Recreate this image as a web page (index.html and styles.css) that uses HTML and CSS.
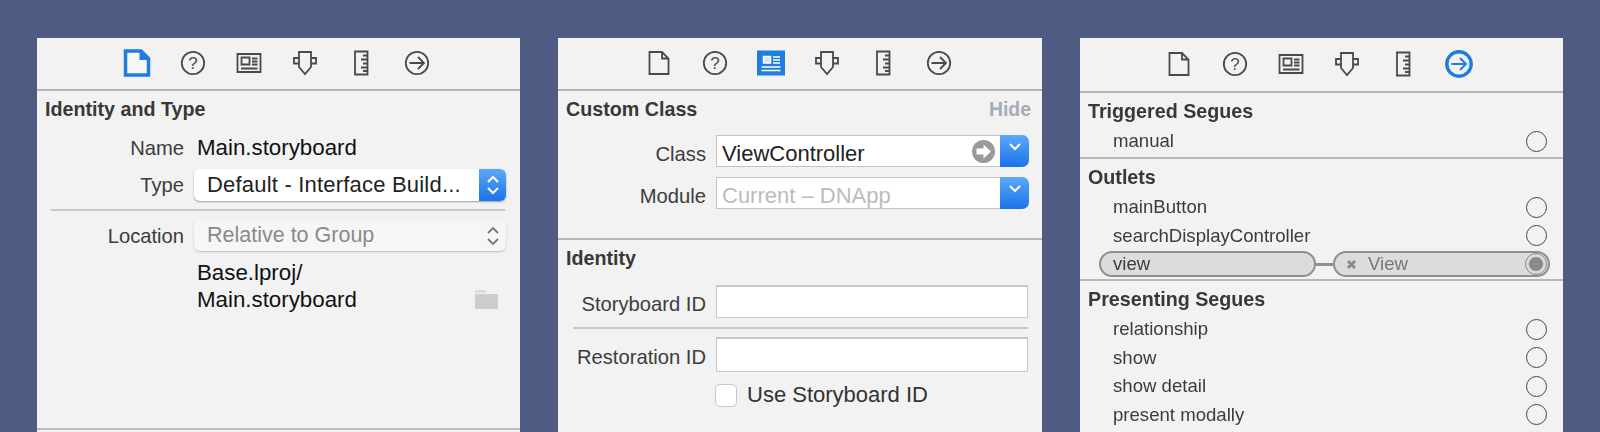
FILE: index.html
```html
<!DOCTYPE html>
<html lang="en">
<head>
<meta charset="utf-8">
<title>Xcode inspectors</title>
<link rel="stylesheet" href="styles.css">
</head>
<body>
<svg class="defs" width="0" height="0" aria-hidden="true">
  <symbol id="i-doc" viewBox="0 0 28 28"><path d="M4.500 3h12.500l6.500 6.500v15.500H4.500z M17 3v6.500h6.500" fill="none" stroke="currentColor" stroke-width="1.800"/></symbol>
  <symbol id="i-news" viewBox="0 0 28 28"><path d="M2.500 5h23v18h-23z M6.500 8.500h8v7h-8z M17 9.500h5.500 M17 12.500h5.500 M17 15.500h5.500 M6 19.500h16.500" fill="none" stroke="currentColor" stroke-width="1.800"/></symbol>
  <symbol id="i-shield" viewBox="0 0 28 28"><path d="M8 3h12v15l-6 7-6-7z M8 9H3v5.500h5 M20 9h5v5.500h-5" fill="none" stroke="currentColor" stroke-width="1.800"/></symbol>
  <symbol id="i-ruler" viewBox="0 0 28 28"><path d="M8 2.500h12.500v23H8z M20 6.500h-4 M20 10.500h-6 M20 14.500h-4 M20 18.500h-6 M20 22h-4" fill="none" stroke="currentColor" stroke-width="1.800"/></symbol>
  <symbol id="i-arrow" viewBox="0 0 28 28"><circle cx="14" cy="14" r="11.200" fill="none" stroke="currentColor" stroke-width="1.800"/><path d="M6.500 14h14.500 M15 8l6 6-6 6" fill="none" stroke="currentColor" stroke-width="1.800"/></symbol>
</svg>

<main class="stage">
  <section class="panel panel-a">
    <nav class="toolbar toolbar-a">
      <span class="tool"><svg class="icon" viewBox="0 0 28 28"><path d="M2.500 2h15.500l7.500 7.500v16.500H2.500z" fill="#f4f6f8" stroke="#1f7de0" stroke-width="3.500"/><path d="M16.500 2v9h9z" fill="#1f7de0"/></svg></span>
      <span class="tool"><svg class="icon" viewBox="0 0 28 28"><circle cx="14" cy="14" r="11.200" fill="none" stroke="currentColor" stroke-width="1.800"/><text x="14" y="20" text-anchor="middle" class="qmark" fill="currentColor">?</text></svg></span>
      <span class="tool"><svg class="icon"><use href="#i-news"/></svg></span>
      <span class="tool"><svg class="icon"><use href="#i-shield"/></svg></span>
      <span class="tool"><svg class="icon"><use href="#i-ruler"/></svg></span>
      <span class="tool"><svg class="icon"><use href="#i-arrow"/></svg></span>
    </nav>
    <div class="sheet sheet-a">
      <h2 class="title">Identity and Type</h2>
      <div class="row row-name"><span class="label">Name</span><span class="value">Main.storyboard</span></div>
      <div class="row row-type">
        <span class="label">Type</span>
        <div class="popup">
          <span class="popup-text">Default - Interface Build...</span>
          <span class="stepper"><svg width="14" height="24" viewBox="0 0 14 24"><path d="M2 9l5-5 5 5 M2 15l5 5 5-5" fill="none" stroke="#fff" stroke-width="2"/></svg></span>
        </div>
      </div>
      <hr class="rule rule-a">
      <div class="row">
        <span class="label label-low">Location</span>
        <div class="popup popup-off">
          <span class="popup-text">Relative to Group</span>
          <span class="stepper-off"><svg width="14" height="24" viewBox="0 0 14 24"><path d="M2 9l5-5 5 5 M2 15l5 5 5-5" fill="none" stroke="#777" stroke-width="1.800"/></svg></span>
        </div>
      </div>
      <div class="path-row">
        <span class="value path">Base.lproj/<br>Main.storyboard</span>
        <svg class="folder" width="23" height="19" viewBox="0 0 23 19"><path d="M0 0h11v3H0z" fill="#dcdcdc"/><path d="M0 4h23v15H0z" fill="#cdcdcd"/></svg>
      </div>
    </div>
  </section>

  <section class="panel panel-b">
    <nav class="toolbar toolbar-b">
      <span class="tool"><svg class="icon"><use href="#i-doc"/></svg></span>
      <span class="tool"><svg class="icon" viewBox="0 0 28 28"><circle cx="14" cy="14" r="11.200" fill="none" stroke="currentColor" stroke-width="1.800"/><text x="14" y="20" text-anchor="middle" class="qmark" fill="currentColor">?</text></svg></span>
      <span class="tool"><svg class="icon" viewBox="0 0 28 28"><path d="M0 1.500h28v25H0z" fill="#1f7de0"/><path d="M6.500 7.500h7v6.500h-7z" fill="#cfe3fa" stroke="#fff" stroke-width="1.500"/><path d="M16 8h7 M16 11h7 M16 14h7 M4.500 18h19 M4.500 21.500h19" stroke="#fff" stroke-width="1.600"/></svg></span>
      <span class="tool"><svg class="icon"><use href="#i-shield"/></svg></span>
      <span class="tool"><svg class="icon"><use href="#i-ruler"/></svg></span>
      <span class="tool"><svg class="icon"><use href="#i-arrow"/></svg></span>
    </nav>
    <div class="sheet sheet-b1">
      <div class="title-row"><h2 class="title">Custom Class</h2><span class="hide">Hide</span></div>
      <div class="row row-class">
        <span class="label">Class</span>
        <div class="combo">
          <span class="combo-text">ViewController</span>
          <svg class="goto" width="23" height="23" viewBox="0 0 23 23"><circle cx="11.500" cy="11.500" r="11.500" fill="#9a9a9a"/><path d="M4.500 8.500h7V4.500l7.500 7-7.500 7v-4h-7z" fill="#fff"/></svg>
          <span class="stepper combo-btn"><svg width="14" height="10" viewBox="0 0 14 10"><path d="M2 2l5 5 5-5" fill="none" stroke="#fff" stroke-width="2"/></svg></span>
        </div>
      </div>
      <div class="row row-module">
        <span class="label">Module</span>
        <div class="combo">
          <span class="combo-text dim">Current – DNApp</span>
          <span class="stepper combo-btn"><svg width="14" height="10" viewBox="0 0 14 10"><path d="M2 2l5 5 5-5" fill="none" stroke="#fff" stroke-width="2"/></svg></span>
        </div>
      </div>
    </div>
    <div class="sheet sheet-b2">
      <h2 class="title">Identity</h2>
      <div class="row row-id"><span class="label">Storyboard ID</span><div class="field"></div></div>
      <hr class="rule rule-b">
      <div class="row row-id2"><span class="label">Restoration ID</span><div class="field"></div></div>
      <label class="check"><span class="box"></span><span class="check-text">Use Storyboard ID</span></label>
    </div>
  </section>

  <section class="panel panel-c">
    <nav class="toolbar toolbar-c">
      <span class="tool"><svg class="icon"><use href="#i-doc"/></svg></span>
      <span class="tool"><svg class="icon" viewBox="0 0 28 28"><circle cx="14" cy="14" r="11.200" fill="none" stroke="currentColor" stroke-width="1.800"/><text x="14" y="20" text-anchor="middle" class="qmark" fill="currentColor">?</text></svg></span>
      <span class="tool"><svg class="icon"><use href="#i-news"/></svg></span>
      <span class="tool"><svg class="icon"><use href="#i-shield"/></svg></span>
      <span class="tool"><svg class="icon"><use href="#i-ruler"/></svg></span>
      <span class="tool"><svg class="icon" viewBox="0 0 28 28"><circle cx="14" cy="14" r="12.200" fill="none" stroke="#1f7de0" stroke-width="3.400"/><path d="M6.500 14h14.500 M15 8l6 6-6 6" fill="none" stroke="#1f7de0" stroke-width="2"/></svg></span>
    </nav>
    <div class="group group-one">
      <h2 class="title">Triggered Segues</h2>
      <div class="conn"><span>manual</span><i class="dot"></i></div>
    </div>
    <div class="group group-two">
      <h2 class="title">Outlets</h2>
      <div class="conn"><span>mainButton</span><i class="dot"></i></div>
      <div class="conn"><span>searchDisplayController</span><i class="dot"></i></div>
      <div class="linked">
        <div class="pill pill-left">view</div>
        <span class="wire"></span>
        <div class="pill pill-right">
          <svg width="11" height="11" viewBox="0 0 11 11"><path d="M2 2l7 7 M9 2l-7 7" stroke="#8a8a8a" stroke-width="3"/></svg>
          <span class="pill-name">View</span>
          <i class="dot dot-on"></i>
        </div>
      </div>
    </div>
    <div class="group">
      <h2 class="title">Presenting Segues</h2>
      <div class="conn"><span>relationship</span><i class="dot"></i></div>
      <div class="conn"><span>show</span><i class="dot"></i></div>
      <div class="conn"><span>show detail</span><i class="dot"></i></div>
      <div class="conn"><span>present modally</span><i class="dot"></i></div>
    </div>
  </section>
</main>
</body>
</html>
```

FILE: styles.css
```css
* { box-sizing: border-box; }
html, body { margin: 0; height: 100%; }
body {
  background: #4f5b82;
  font-family: "Liberation Sans", Arial, sans-serif;
  overflow: hidden;
}
.defs { position: absolute; }
.stage {
  display: flex;
  height: 432px;
  padding: 38px 0 0 37px;
  gap: 38px;
  overflow: hidden;
  filter: blur(.3px);
}
.panel {
  width: 483px;
  height: 394px;
  background: #f2f2f2;
  color: #3a3a3a;
  flex: none;
  overflow: hidden;
}
.panel-b { width: 484px; }
.toolbar {
  display: flex;
  justify-content: center;
  align-items: center;
  height: 53px;
  padding-bottom: 2px;
  border-bottom: 2px solid #b4b4b4;
  color: #4a4a4a;
}
.toolbar-a { padding-right: 3px; }
.toolbar-b { padding-right: 2px; }
.toolbar-c { height: 55px; padding-right: 5px; }
.tool {
  width: 56px;
  display: flex;
  justify-content: center;
}
.icon { width: 28px; height: 28px; display: block; }
.qmark { font: 17px "Liberation Sans", Arial, sans-serif; }

.title {
  margin: 0;
  font-size: 19.700px;
  line-height: 36px;
  font-weight: bold;
  color: #383838;
}
.sheet-a { height: 339px; padding: 0 14px 0 8px; border-bottom: 2px solid #bdbdbd; }
.row { display: flex; align-items: center; gap: 10px; }
.label {
  width: 139px;
  flex: none;
  text-align: right;
  font-size: 20.200px;
  color: #3c3c3c;
}
.label-low { padding-top: 2px; }
.value { font-size: 22.300px; color: #111; padding-left: 3px; }
.row-name { height: 30px; margin-top: 6px; }
.row-type { height: 32px; margin-top: 6px; }
.popup {
  flex: 1;
  height: 32px;
  display: flex;
  align-items: center;
  justify-content: space-between;
  background: #fff;
  border-radius: 6px;
  box-shadow: 0 1px 2px rgba(0,0,0,.35);
  overflow: hidden;
}
.popup-text { padding-left: 13px; font-size: 22px; letter-spacing: .2px; color: #222; }
.stepper {
  width: 27px;
  height: 100%;
  display: flex;
  align-items: center;
  justify-content: center;
  background: linear-gradient(#5ba9f7, #1b72ea);
}
.popup-off { background: #f6f6f6; height: 31px; box-shadow: 0 1px 2px rgba(0,0,0,.22); }
.popup-off .popup-text { color: #8a8a8a; font-size: 21.500px; letter-spacing: 0; }
.stepper-off { width: 27px; display: flex; justify-content: center; }
.rule { border: 0; height: 2px; background: #c8c8c8; margin: 0; }
.rule-a { margin: 8px 1px 9px 6px; }
.path-row {
  display: flex;
  justify-content: space-between;
  align-items: flex-end;
  margin: 8px 8px 0 149px;
}
.path { line-height: 27px; }
.folder { margin-bottom: 4px; }

.sheet-b1 { height: 149px; padding: 0 13px 0 8px; border-bottom: 2px solid #b4b4b4; }
.title-row { display: flex; justify-content: space-between; }
.hide { font-size: 19.400px; line-height: 36px; font-weight: bold; color: #a4acb8; margin-right: -2px; }
.sheet-b1 .label, .sheet-b2 .label { width: 140px; padding-top: 6px; }
.row-class { height: 32px; margin-top: 8px; }
.row-module { height: 32px; margin-top: 10px; }
.combo {
  flex: 1;
  height: 32px;
  display: flex;
  align-items: center;
  background: #fff;
  border: 1px solid #c4c4c4;
  border-right: 0;
  border-radius: 0 7px 7px 0;
}
.combo-text { flex: 1; padding: 5px 0 0 5px; font-size: 22px; color: #222; }
.combo-text.dim { color: #bcbcbc; }
.goto { margin-right: 5px; }
.combo-btn {
  width: 29px;
  height: 32px;
  margin: -1px 0;
  border-radius: 0 7px 7px 0;
  padding-bottom: 8px;
}
.sheet-b2 { padding: 0 14px 0 8px; }
.row-id { height: 33px; margin-top: 9px; }
.row-id2 { height: 35px; }
.field {
  flex: 1;
  height: 100%;
  background: #fff;
  border: 1px solid #c8c8c8;
  border-top-width: 2px;
}
.rule-b { margin: 9px 0 8px 7px; }
.check {
  display: flex;
  align-items: center;
  gap: 10px;
  margin: 10px 0 0 149px;
}
.box {
  width: 22px;
  height: 23px;
  background: #fff;
  border: 1px solid #c8c8c8;
  border-radius: 5px;
}
.check-text { font-size: 22px; color: #333; }

.group { padding: 0 12px 0 8px; }
.group .title { margin-bottom: -2px; }
.group-one { height: 66px; border-bottom: 2px solid #b8b8b8; }
.group-two { height: 122px; border-bottom: 2px solid #b8b8b8; }
.conn {
  display: flex;
  justify-content: space-between;
  align-items: center;
  height: 28.500px;
  padding-left: 25px;
  font-size: 18.600px;
  color: #3c3c3c;
}
.dot {
  width: 21px;
  height: 21px;
  border: 1.700px solid #444;
  border-radius: 50%;
  flex: none;
  margin-right: 4px;
}
.linked { display: flex; align-items: center; margin: 1px 1px 0 11px; height: 26px; }
.pill {
  height: 26px;
  background: #dcdcdc;
  border: 2px solid #8f8f8f;
  border-radius: 13px;
  display: flex;
  align-items: center;
  font-size: 18.600px;
  color: #3c3c3c;
}
.pill-left { width: 217px; padding-left: 12px; }
.wire { width: 17px; height: 3px; background: #8f8f8f; }
.pill-right { flex: 1; padding: 0 1px 0 11px; color: #777; }
.pill-name { margin-left: 11px; flex: 1; }
.dot-on {
  width: 22px;
  height: 22px;
  margin: 0;
  border: 1.500px solid #8a8a8a;
  background: radial-gradient(circle, #8a8a8a 0 6.500px, #dcdcdc 7.500px);
}
```
